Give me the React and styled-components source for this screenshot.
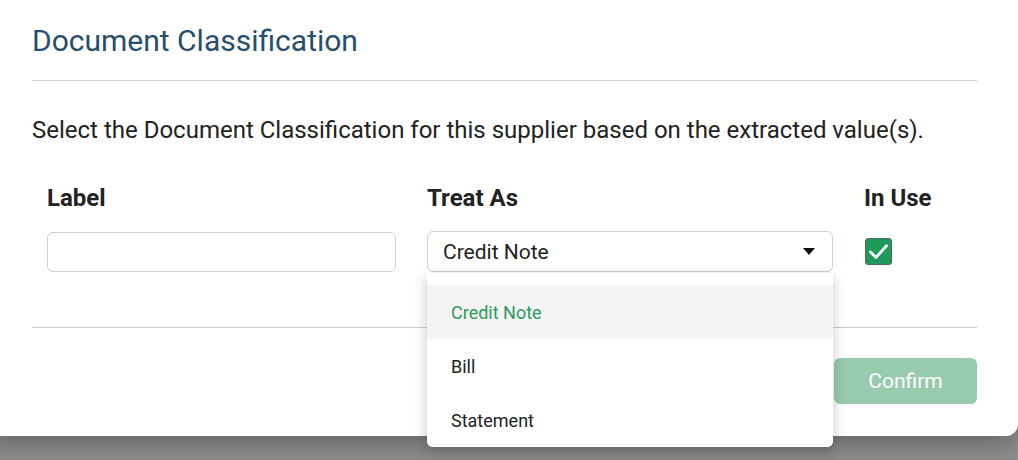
import styled, { createGlobalStyle } from "styled-components";

const GlobalStyle = createGlobalStyle`
  html, body {
    margin: 0;
    padding: 0;
    height: 100%;
    overflow: hidden;
    background: linear-gradient(#767676, #8d8d8d);
  }
  body {
    font-family: Roboto, "Liberation Sans", sans-serif;
  }
`;

const options = ["Credit Note", "Bill", "Statement"];

const CheckIcon = () => (
  <svg width="23" height="23" viewBox="0 0 20 20" fill="none">
    <path
      d="M3 10.5 L7.8 15.2 L17 5"
      stroke="#fff"
      strokeWidth="2.4"
      strokeLinecap="round"
      strokeLinejoin="round"
    />
  </svg>
);

const App = () => {
  return (
    <>
      <GlobalStyle />
      <Modal>
        <Header>
          <Title>Document Classification</Title>
        </Header>
        <Body>
          <Intro>
            Select the Document Classification for this supplier based on the
            extracted value(s).
          </Intro>
          <FieldGrid>
            <ColHead>Label</ColHead>
            <ColHead>Treat As</ColHead>
            <ColHead>In Use</ColHead>
            <TextInput />
            <SelectWrap>
              <SelectBox>
                <span>Credit Note</span>
                <Caret />
              </SelectBox>
              <Menu>
                {options.map((o, i) => (
                  <MenuItem key={o} $active={i === 0}>
                    {o}
                  </MenuItem>
                ))}
              </Menu>
            </SelectWrap>
            <Checkbox>
              <CheckIcon />
            </Checkbox>
          </FieldGrid>
        </Body>
        <Footer>
          <ConfirmButton disabled>Confirm</ConfirmButton>
        </Footer>
      </Modal>
    </>
  );
};

export default App;

const Modal = styled.div`
  width: 1040px;
  margin-left: -22px;
  background: #fff;
  border-radius: 0 0 12px 12px;
  box-shadow: 0 8px 24px rgba(0, 0, 0, 0.25);
  padding: 0 41px 32px 54px;
  box-sizing: border-box;
`;

const Header = styled.div`
  padding: 24px 0 22px;
  border-bottom: 1px solid #c8d6d7;
`;

const Title = styled.h2`
  margin: 0;
  font-size: 30px;
  line-height: 34px;
  font-weight: 400;
  color: #274f6b;
`;

const Body = styled.div`
  padding: 35px 0 55px;
  border-bottom: 1px solid #c8d0d1;
`;

const Intro = styled.p`
  margin: 0;
  font-size: 24px;
  line-height: 28px;
  color: #222;
`;

const FieldGrid = styled.div`
  display: grid;
  grid-template-columns: 349px 406px auto;
  column-gap: 31px;
  row-gap: 19px;
  padding-left: 15px;
  margin-top: 40px;
  align-items: center;
`;

const ColHead = styled.div`
  font-size: 24px;
  line-height: 28px;
  font-weight: 700;
  color: #222;
`;

const TextInput = styled.input`
  height: 40px;
  box-sizing: border-box;
  border: 1px solid #c9d3d4;
  border-radius: 6px;
  background: #fff;
  outline: none;
`;

const SelectWrap = styled.div`
  position: relative;
`;

const SelectBox = styled.div`
  height: 41px;
  box-sizing: border-box;
  border: 1px solid #c9d3d4;
  border-radius: 6px;
  display: flex;
  align-items: center;
  justify-content: space-between;
  padding: 0 17px 0 15px;
  font-size: 21px;
  color: #222;
`;

const Caret = styled.span`
  width: 0;
  height: 0;
  border-left: 6px solid transparent;
  border-right: 6px solid transparent;
  border-top: 7px solid #111;
`;

const Menu = styled.div`
  position: absolute;
  top: 42px;
  left: 0;
  right: 0;
  background: #fff;
  padding-top: 12px;
  border-radius: 0 0 6px 6px;
  box-shadow: 0 4px 14px rgba(0, 0, 0, 0.22);
  z-index: 5;
`;

const MenuItem = styled.div`
  height: 54px;
  display: flex;
  align-items: center;
  padding-left: 24px;
  font-size: 18px;
  color: ${(p) => (p.$active ? "#2a9b5c" : "#222")};
  background: ${(p) => (p.$active ? "#f4f4f4" : "#fff")};
  &:last-child {
    border-radius: 0 0 6px 6px;
  }
`;

const Checkbox = styled.div`
  width: 27px;
  height: 27px;
  box-sizing: border-box;
  margin-left: 1px;
  background: #1f9a5b;
  border: 1px solid #4d6e5c;
  border-radius: 3px;
  display: flex;
  align-items: center;
  justify-content: center;
`;

const Footer = styled.div`
  display: flex;
  justify-content: flex-end;
  padding-top: 30px;
`;

const ConfirmButton = styled.button`
  width: 143px;
  height: 46px;
  border: none;
  border-radius: 6px;
  background: #98cbad;
  color: #fff;
  font-family: Roboto, "Liberation Sans", sans-serif;
  font-size: 21px;
`;
